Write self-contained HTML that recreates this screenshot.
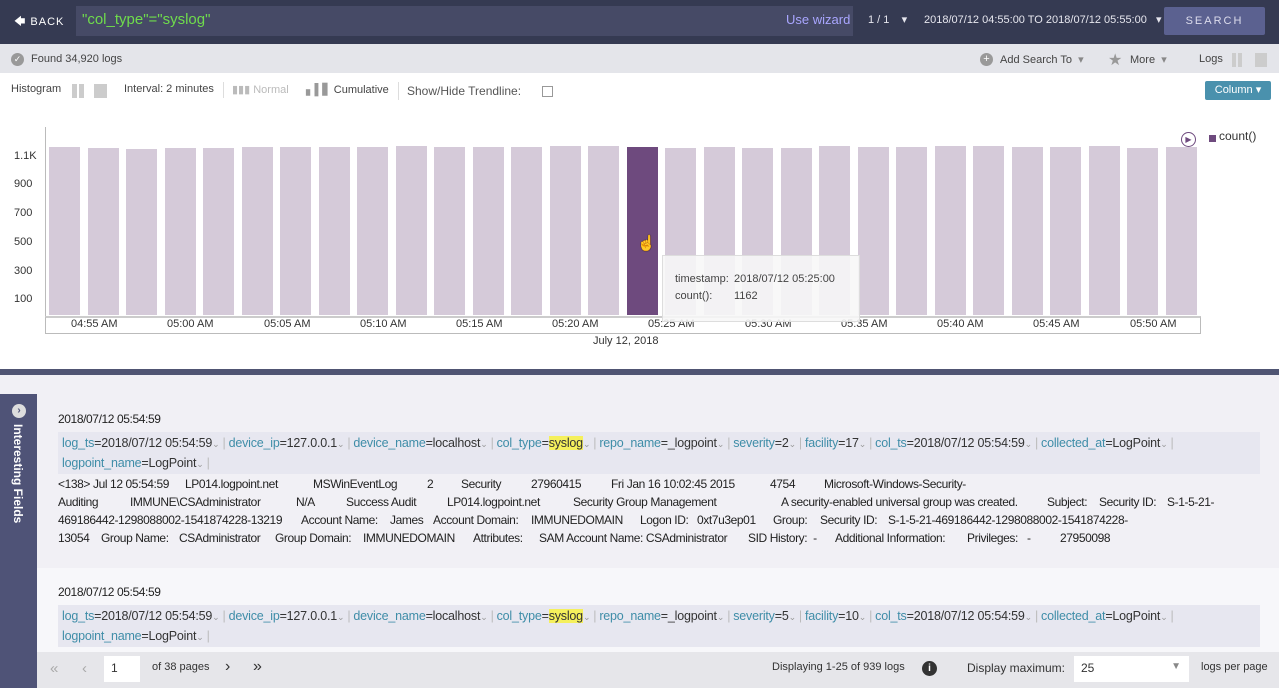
<!DOCTYPE html>
<html><head><meta charset="utf-8"><style>
*{margin:0;padding:0;box-sizing:border-box}
body{width:1279px;height:688px;overflow:hidden;font-family:"Liberation Sans",sans-serif;font-size:12px;color:#333;position:relative;background:#fff}
.a{position:absolute;white-space:nowrap}
.bar{position:absolute;background:#d5cad9;width:31px}
.yl{position:absolute;left:14px;font-size:11px;color:#333}
.xl{position:absolute;top:318px;font-size:11px;color:#333}
.f{color:#3f8da8}
.sep{color:#bbb;margin:0 3px}
.dv{color:#999;font-size:9px}
.hl{background:#f5f05c}
.fr{position:absolute;left:58px;width:1202px;background:#e7e7f0;font-size:12.5px;padding:2px 4px;line-height:19px;color:#333;letter-spacing:-0.2px}
.lt{position:absolute;font-size:12px;color:#222;white-space:nowrap;letter-spacing:-0.4px}
</style></head><body>
<div class="a" style="left:0;top:0;width:1279px;height:44px;background:#353a52"></div>
<div class="a" style="left:14px;top:13px;color:#fff;font-size:11px;letter-spacing:1px">&#129092; BACK</div>
<div class="a" style="left:76px;top:6px;width:777px;height:30px;background:#464a66"></div>
<div class="a" style="left:82px;top:11px;color:#6fdc4c;font-size:15px">"col_type"="syslog"</div>
<div class="a" style="left:786px;top:12px;color:#a9a6ff;font-size:13px">Use wizard</div>
<div class="a" style="left:868px;top:13px;color:#e6e6ee;font-size:11px">1 / 1 &nbsp;&nbsp; ▾</div>
<div class="a" style="left:924px;top:13px;color:#e6e6ee;font-size:11px">2018/07/12 04:55:00 TO 2018/07/12 05:55:00 &nbsp;&nbsp;▾</div>
<div class="a" style="left:1164px;top:7px;width:101px;height:28px;background:#5b6190;border-radius:2px;color:#dcdcec;font-size:11px;letter-spacing:2px;text-align:center;line-height:28px">SEARCH</div>
<div class="a" style="left:0;top:44px;width:1279px;height:29px;background:#e4e5ea"></div>
<div class="a" style="left:11px;top:53px;width:13px;height:13px;border-radius:50%;background:#999;color:#fff;font-size:9px;text-align:center;line-height:13px">✓</div>
<div class="a" style="left:31px;top:53px;font-size:11px;color:#444">Found 34,920 logs</div>
<div class="a" style="left:980px;top:53px;width:13px;height:13px;border-radius:50%;background:#999;color:#fff;font-size:11px;text-align:center;line-height:13px">+</div>
<div class="a" style="left:1000px;top:53px;font-size:11px;color:#444">Add Search To &nbsp;<span style="color:#888">▾</span></div>
<div class="a" style="left:1108px;top:50px;font-size:16px;color:#999">★</div>
<div class="a" style="left:1130px;top:53px;font-size:11px;color:#444">More &nbsp;<span style="color:#888">▾</span></div>
<div class="a" style="left:1199px;top:53px;font-size:11px;color:#444">Logs</div>
<div class="a" style="left:1232px;top:53px;width:4px;height:14px;background:#ccc"></div>
<div class="a" style="left:1238px;top:53px;width:4px;height:14px;background:#ccc"></div>
<div class="a" style="left:1255px;top:53px;width:12px;height:14px;background:#ccc"></div>
<div class="a" style="left:11px;top:83px;font-size:11px;color:#444">Histogram</div>
<div class="a" style="left:72px;top:84px;width:5px;height:14px;background:#ccc"></div>
<div class="a" style="left:79px;top:84px;width:5px;height:14px;background:#ccc"></div>
<div class="a" style="left:94px;top:84px;width:13px;height:14px;background:#ccc"></div>
<div class="a" style="left:124px;top:83px;font-size:11px;color:#444">Interval: 2 minutes</div>
<div class="a" style="left:223px;top:82px;width:1px;height:16px;background:#ddd"></div>
<div class="a" style="left:232px;top:83px;font-size:11px;color:#bbb">▮▮▮ Normal</div>
<div class="a" style="left:306px;top:83px;font-size:11px;color:#444"><span style="color:#999">▖▌▋</span> Cumulative</div>
<div class="a" style="left:398px;top:82px;width:1px;height:18px;background:#ddd"></div>
<div class="a" style="left:407px;top:84px;font-size:12px;color:#555">Show/Hide Trendline:</div>
<div class="a" style="left:542px;top:86px;width:11px;height:11px;border:1px solid #999;background:#fff"></div>
<div class="a" style="left:1205px;top:81px;width:66px;height:19px;background:#4a91ad;border-radius:2px;color:#fff;font-size:11px;line-height:19px;text-align:center">Column ▾</div>
<div class="a" style="left:45px;top:127px;width:1px;height:190px;background:#bbb"></div>
<div class="a" style="left:45px;top:316px;width:1156px;height:18px;border:1px solid #bbb;border-top:2px solid #ccc"></div>
<div class="yl" style="top:150px">1.1K</div>
<div class="yl" style="top:178px">900</div>
<div class="yl" style="top:207px">700</div>
<div class="yl" style="top:236px">500</div>
<div class="yl" style="top:265px">300</div>
<div class="yl" style="top:293px">100</div>
<div id="bars"></div>
<div class="xl" style="left:71px">04:55 AM</div>
<div class="xl" style="left:167px">05:00 AM</div>
<div class="xl" style="left:264px">05:05 AM</div>
<div class="xl" style="left:360px">05:10 AM</div>
<div class="xl" style="left:456px">05:15 AM</div>
<div class="xl" style="left:552px">05:20 AM</div>
<div class="xl" style="left:648px">05:25 AM</div>
<div class="xl" style="left:745px">05:30 AM</div>
<div class="xl" style="left:841px">05:35 AM</div>
<div class="xl" style="left:937px">05:40 AM</div>
<div class="xl" style="left:1033px">05:45 AM</div>
<div class="xl" style="left:1130px">05:50 AM</div>
<div class="a" style="left:593px;top:335px;font-size:11px;color:#333">July 12, 2018</div>
<div class="a" style="left:1181px;top:132px;width:15px;height:15px;border:1px solid #6e4a7e;border-radius:50%;color:#6e4a7e;font-size:8px;line-height:13px;text-align:center">▶</div>
<div class="a" style="left:1209px;top:133px;width:7px;height:7px;background:#6e4a7e;margin-top:2px"></div>
<div class="a" style="left:1219px;top:129px;font-size:12px;color:#333">count()</div>
<div class="a" style="left:662px;top:255px;width:198px;height:67px;background:rgba(247,247,247,.88);border:1px solid #ddd"></div>
<div class="a" style="left:675px;top:273px;font-size:11px;color:#444">timestamp:</div>
<div class="a" style="left:734px;top:273px;font-size:11px;color:#444">2018/07/12 05:25:00</div>
<div class="a" style="left:675px;top:290px;font-size:11px;color:#444">count():</div>
<div class="a" style="left:734px;top:290px;font-size:11px;color:#444">1162</div>
<div class="a" style="left:637px;top:234px;font-size:15px;color:#fff;text-shadow:0 0 1px #000">☝</div>
<div class="a" style="left:0;top:369px;width:1279px;height:6px;background:#505573"></div>
<div class="a" style="left:615px;top:373px;width:50px;height:17px;background:#505573;border-radius:0 0 4px 4px;color:#fff;font-size:10px;text-align:center;line-height:15px">︽</div>
<div class="a" style="left:0;top:375px;width:1279px;height:313px;background:#f1f0f5"></div>
<div class="a" style="left:0;top:394px;width:37px;height:294px;background:#4f5377"></div>
<div class="a" style="left:12px;top:404px;width:14px;height:14px;border-radius:50%;background:#ddd;color:#4f5377;font-size:10px;line-height:14px;text-align:center;font-weight:bold">›</div>
<div class="a" style="left:11px;top:424px;color:#fff;font-weight:bold;font-size:12px;writing-mode:vertical-rl">Interesting Fields</div>
<div class="a" style="left:37px;top:568px;width:1242px;height:84px;background:#f7f7fa"></div>

<div class="lt" style="left:58px;top:412px">2018/07/12 05:54:59</div>
<div class="fr" style="top:432px;height:42px"><span class="f">log_ts</span>=2018/07/12 05:54:59<span class="dv">&#8964;</span><span class="sep">|</span><span class="f">device_ip</span>=127.0.0.1<span class="dv">&#8964;</span><span class="sep">|</span><span class="f">device_name</span>=localhost<span class="dv">&#8964;</span><span class="sep">|</span><span class="f">col_type</span>=<span class="hl">syslog</span><span class="dv">&#8964;</span><span class="sep">|</span><span class="f">repo_name</span>=_logpoint<span class="dv">&#8964;</span><span class="sep">|</span><span class="f">severity</span>=2<span class="dv">&#8964;</span><span class="sep">|</span><span class="f">facility</span>=17<span class="dv">&#8964;</span><span class="sep">|</span><span class="f">col_ts</span>=2018/07/12 05:54:59<span class="dv">&#8964;</span><span class="sep">|</span><span class="f">collected_at</span>=LogPoint<span class="dv">&#8964;</span><span class="sep">|</span><br><span class="f">logpoint_name</span>=LogPoint<span class="dv">&#8964;</span><span class="sep">|</span></div>

<div class="lt" style="left:58px;top:477px">&lt;138&gt; Jul 12 05:54:59</div>
<div class="lt" style="left:185px;top:477px">LP014.logpoint.net</div>
<div class="lt" style="left:313px;top:477px">MSWinEventLog</div>
<div class="lt" style="left:427px;top:477px">2</div>
<div class="lt" style="left:461px;top:477px">Security</div>
<div class="lt" style="left:531px;top:477px">27960415</div>
<div class="lt" style="left:611px;top:477px">Fri Jan 16 10:02:45 2015</div>
<div class="lt" style="left:770px;top:477px">4754</div>
<div class="lt" style="left:824px;top:477px">Microsoft-Windows-Security-</div>

<div class="lt" style="left:58px;top:495px">Auditing</div>
<div class="lt" style="left:130px;top:495px">IMMUNE\CSAdministrator</div>
<div class="lt" style="left:296px;top:495px">N/A</div>
<div class="lt" style="left:346px;top:495px">Success Audit</div>
<div class="lt" style="left:447px;top:495px">LP014.logpoint.net</div>
<div class="lt" style="left:573px;top:495px">Security Group Management</div>
<div class="lt" style="left:781px;top:495px">A security-enabled universal group was created.</div>
<div class="lt" style="left:1047px;top:495px">Subject:</div>
<div class="lt" style="left:1099px;top:495px">Security ID:</div>
<div class="lt" style="left:1167px;top:495px">S-1-5-21-</div>

<div class="lt" style="left:58px;top:513px">469186442-1298088002-1541874228-13219</div>
<div class="lt" style="left:301px;top:513px">Account Name:</div>
<div class="lt" style="left:390px;top:513px">James</div>
<div class="lt" style="left:433px;top:513px">Account Domain:</div>
<div class="lt" style="left:531px;top:513px">IMMUNEDOMAIN</div>
<div class="lt" style="left:640px;top:513px">Logon ID:</div>
<div class="lt" style="left:697px;top:513px">0xt7u3ep01</div>
<div class="lt" style="left:773px;top:513px">Group:</div>
<div class="lt" style="left:820px;top:513px">Security ID:</div>
<div class="lt" style="left:888px;top:513px">S-1-5-21-469186442-1298088002-1541874228-</div>

<div class="lt" style="left:58px;top:531px">13054</div>
<div class="lt" style="left:101px;top:531px">Group Name:</div>
<div class="lt" style="left:179px;top:531px">CSAdministrator</div>
<div class="lt" style="left:275px;top:531px">Group Domain:</div>
<div class="lt" style="left:363px;top:531px">IMMUNEDOMAIN</div>
<div class="lt" style="left:473px;top:531px">Attributes:</div>
<div class="lt" style="left:539px;top:531px">SAM Account Name: CSAdministrator</div>
<div class="lt" style="left:748px;top:531px">SID History:&nbsp; -</div>
<div class="lt" style="left:835px;top:531px">Additional Information:</div>
<div class="lt" style="left:967px;top:531px">Privileges:</div>
<div class="lt" style="left:1027px;top:531px">-</div>
<div class="lt" style="left:1060px;top:531px">27950098</div>

<div class="lt" style="left:58px;top:585px">2018/07/12 05:54:59</div>
<div class="fr" style="top:605px;height:42px"><span class="f">log_ts</span>=2018/07/12 05:54:59<span class="dv">&#8964;</span><span class="sep">|</span><span class="f">device_ip</span>=127.0.0.1<span class="dv">&#8964;</span><span class="sep">|</span><span class="f">device_name</span>=localhost<span class="dv">&#8964;</span><span class="sep">|</span><span class="f">col_type</span>=<span class="hl">syslog</span><span class="dv">&#8964;</span><span class="sep">|</span><span class="f">repo_name</span>=_logpoint<span class="dv">&#8964;</span><span class="sep">|</span><span class="f">severity</span>=5<span class="dv">&#8964;</span><span class="sep">|</span><span class="f">facility</span>=10<span class="dv">&#8964;</span><span class="sep">|</span><span class="f">col_ts</span>=2018/07/12 05:54:59<span class="dv">&#8964;</span><span class="sep">|</span><span class="f">collected_at</span>=LogPoint<span class="dv">&#8964;</span><span class="sep">|</span><br><span class="f">logpoint_name</span>=LogPoint<span class="dv">&#8964;</span><span class="sep">|</span></div>

<div class="a" style="left:37px;top:652px;width:1242px;height:36px;background:#e6e6ea"></div>
<div class="a" style="left:50px;top:660px;font-size:15px;color:#aaa">«</div>
<div class="a" style="left:82px;top:660px;font-size:15px;color:#aaa">‹</div>
<div class="a" style="left:104px;top:656px;width:36px;height:26px;background:#fff;font-size:12px;padding:5px 7px">1</div>
<div class="a" style="left:152px;top:661px;font-size:11px;color:#333">of 38 pages</div>
<div class="a" style="left:225px;top:658px;font-size:16px;color:#333">›</div>
<div class="a" style="left:253px;top:658px;font-size:16px;color:#333">»</div>
<div class="a" style="left:772px;top:661px;font-size:11px;color:#333">Displaying 1-25 of 939 logs</div>
<div class="a" style="left:922px;top:661px;width:15px;height:15px;border-radius:50%;background:#333;color:#fff;font-size:10px;font-weight:bold;text-align:center;line-height:15px">i</div>
<div class="a" style="left:967px;top:661px;font-size:12px;color:#333">Display maximum:</div>
<div class="a" style="left:1074px;top:656px;width:115px;height:26px;background:#fff;font-size:12px;padding:5px 7px">25<span style="position:absolute;right:8px;color:#888;font-size:10px">▼</span></div>
<div class="a" style="left:1201px;top:661px;font-size:11px;color:#333">logs per page</div>

<script>
var tops=[147,148,149,148,148,147,147,147,147,146,147,147,147,146,146,147,148,147,148,148,146,147,147,146,146,147,147,146,148,147];
var h='';for(var i=0;i<30;i++){var x=49+i*38.5;h+='<div class="bar" style="left:'+x+'px;top:'+tops[i]+'px;height:'+(315-tops[i])+'px'+(i==15?';background:#6e4a7e':'')+'"></div>';}
document.getElementById('bars').innerHTML=h;
</script>
</body></html>
